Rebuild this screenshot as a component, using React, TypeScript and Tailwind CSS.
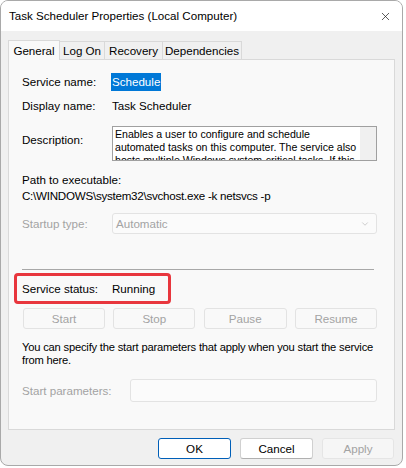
import { X, ChevronDown } from 'lucide-react';

const font = { fontFamily: '"Segoe UI", "Liberation Sans", Arial, sans-serif' };

function PlainButton({ label, w }: { label: string; w: string }) {
  return (
    <div className={`${w} h-[21px] flex items-center justify-center rounded-[3px] border border-[#e3e3e3] bg-[#f9f9f9] text-[#a3a3a3]`}>
      {label}
    </div>
  );
}

export default function App() {
  const tabs = [
    { t: 'Log On', w: 'w-[45px]' },
    { t: 'Recovery', w: 'w-[58px]' },
    { t: 'Dependencies', w: 'w-[79px]' },
  ];

  return (
    <div className="w-[406px] h-[468px] bg-white overflow-hidden text-[11.6px] text-black" style={font}>
      <div className="w-[403px] h-[466px] rounded-[8px] border border-[#a9a9a9] bg-[#f0f0f0] flex flex-col overflow-hidden">
        {/* title bar */}
        <div className="h-[30px] bg-white flex items-center justify-between pl-[8px] pr-[10px] shrink-0">
          <span className="leading-none">Task Scheduler Properties (Local Computer)</span>
          <X className="w-[13px] h-[13px] text-[#1a1a1a]" strokeWidth={1.3} />
        </div>

        <div className="px-[7px] pt-[8px] flex flex-col">
          {/* tabs */}
          <div className="flex items-end h-[20px] relative z-10">
            <div className="h-[20px] w-[52px] -mb-px flex items-center justify-center border border-b-0 border-[#d9d9d9] bg-[#f9f9f9]">
              General
            </div>
            {tabs.map(({ t, w }) => (
              <div key={t} className={`${w} h-[18px] flex items-center justify-center border border-l-0 border-b-0 border-[#d9d9d9] bg-[#f0f0f0]`}>
                {t}
              </div>
            ))}
          </div>

          {/* panel */}
          <div className="h-[371px] border border-[#d9d9d9] bg-[#f9f9f9] pl-[13px] pr-[17px] flex flex-col">
            <div className="flex items-center h-[20px] mt-[12px]">
              <span className="w-[90px]">Service name:</span>
              <span className="bg-[#0078d7] text-white px-px -ml-px">Schedule</span>
            </div>
            <div className="flex items-center h-[20px] mt-[4px]">
              <span className="w-[90px]">Display name:</span>
              <span>Task Scheduler</span>
            </div>
            <div className="flex mt-[10px]">
              <span className="w-[90px] pt-[5px]">Description:</span>
              <div className="flex-1 h-[35px] border border-[#a0a0a0] bg-white flex overflow-hidden">
                <div className="flex-1 pl-[2px] pt-[1px] text-[10.6px] leading-[13px] overflow-hidden" style={{ fontFamily: '"Liberation Sans", Arial, sans-serif' }}>
                  Enables a user to configure and schedule automated tasks on this computer. The service also hosts multiple Windows system-critical tasks. If this service is stopped or disabled, these tasks will not be run at their scheduled times.
                </div>
                <div className="w-[16px] bg-[#f0f0f0]" />
              </div>
            </div>
            <div className="mt-[11px] leading-[16px]">Path to executable:</div>
            <div className="leading-[16px] tracking-[-0.25px]">C:\WINDOWS\system32\svchost.exe -k netsvcs -p</div>
            <div className="flex items-center mt-[9px]">
              <span className="w-[90px] text-[#a3a3a3]">Startup type:</span>
              <div className="flex-1 h-[21px] rounded-[3px] border border-[#e3e3e3] bg-[#fbfbfb] flex items-center justify-between pl-[3px] pr-[6px] text-[#a3a3a3]">
                <span>Automatic</span>
                <ChevronDown className="w-[10px] h-[10px] text-[#b0b0b0]" strokeWidth={1.5} />
              </div>
            </div>
            <div className="mt-[35px] h-px bg-[#a8a8a8] mr-[3px]" />
            <div className="mt-[3px] -ml-[8px] w-[157px] h-[31px] rounded-[4px] border-[3px] border-[#e8363d] flex items-center pl-[5px]">
              <span className="w-[90px]">Service status:</span>
              <span>Running</span>
            </div>
            <div className="flex justify-between mt-[4px] pl-px">
              <PlainButton label="Start" w="w-[82px]" />
              <PlainButton label="Stop" w="w-[82px]" />
              <PlainButton label="Pause" w="w-[83px]" />
              <PlainButton label="Resume" w="w-[82px]" />
            </div>
            <div className="mt-[12px] leading-[13px] whitespace-nowrap text-[11.2px] tracking-[-0.2px]">
              You can specify the start parameters that apply when you start the service
              <br />
              from here.
            </div>
            <div className="flex items-center mt-[12px]">
              <span className="w-[108px] text-[#a3a3a3]">Start parameters:</span>
              <div className="flex-1 h-[23px] rounded-[3px] border border-[#e3e3e3] bg-[#fbfbfb]" />
            </div>
          </div>

          {/* dialog buttons */}
          <div className="flex justify-end gap-[9px] mt-[8px] pr-px">
            <div className="w-[73px] h-[21px] rounded-[3px] border border-[#005fb8] bg-white flex items-center justify-center">OK</div>
            <div className="w-[73px] h-[21px] rounded-[3px] border border-[#d0d0d0] border-b-[#b0b0b0] bg-white flex items-center justify-center">Cancel</div>
            <div className="w-[72px] h-[21px] rounded-[3px] border border-[#e5e5e5] bg-[#f6f6f6] flex items-center justify-center text-[#a3a3a3]">Apply</div>
          </div>
        </div>
      </div>
    </div>
  );
}
